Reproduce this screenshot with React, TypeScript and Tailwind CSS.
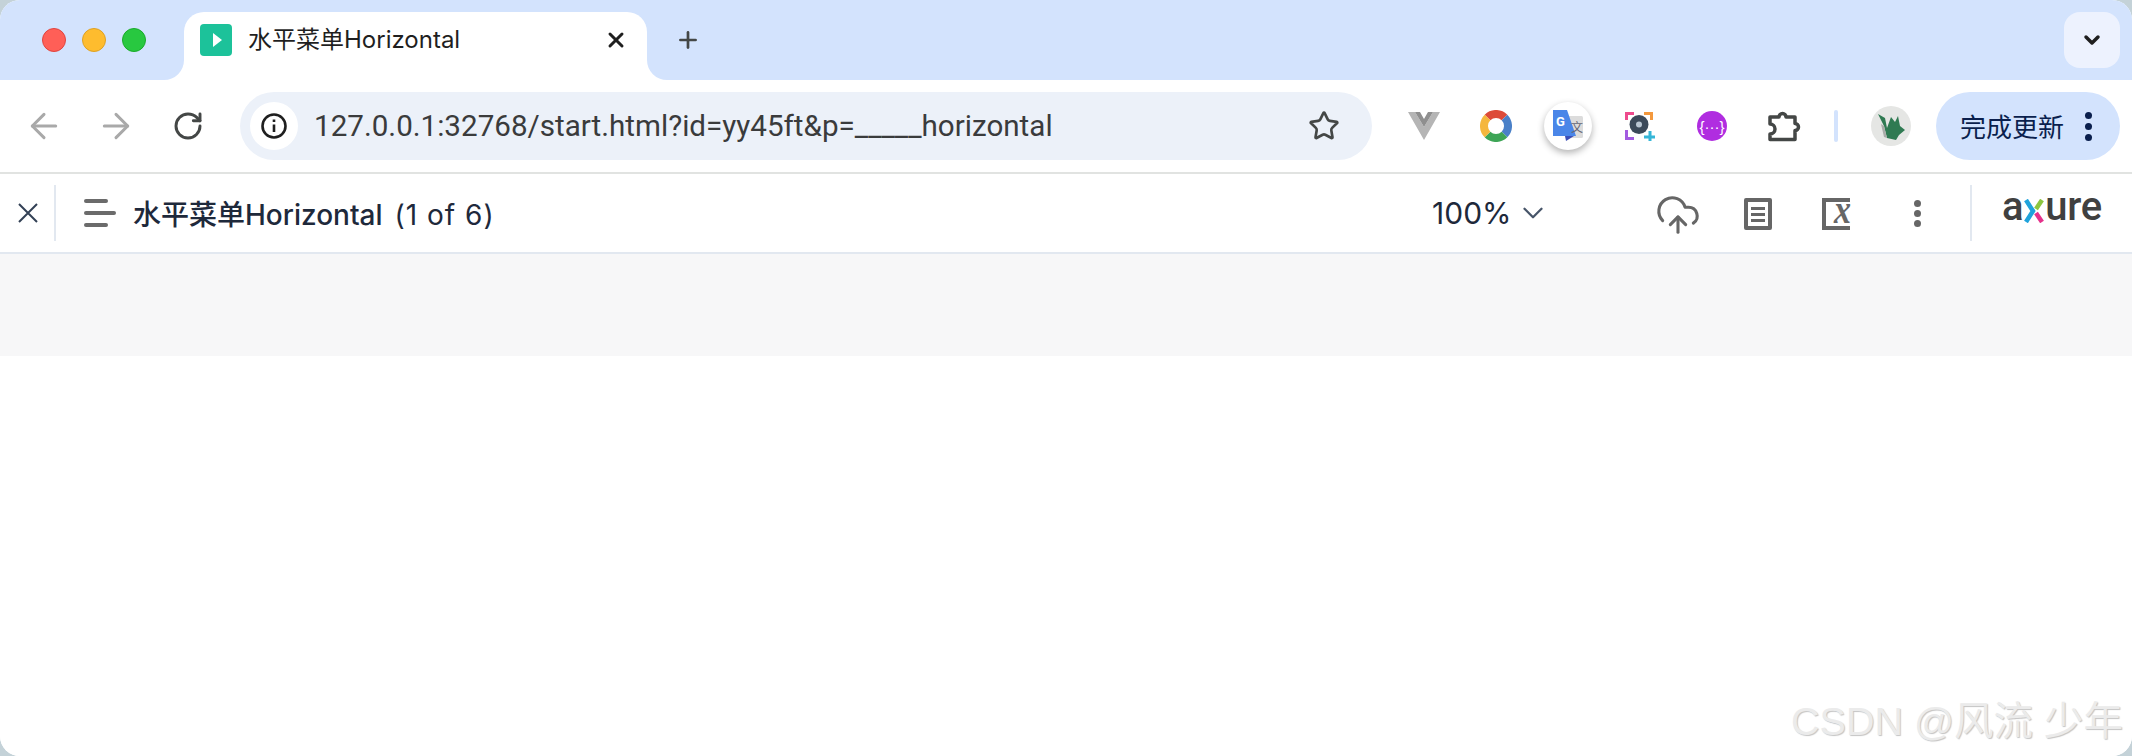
import { ArrowLeft, ArrowRight, RotateCw, Star, Plus, X, ChevronDown, CloudUpload } from "lucide-react"

const cjk = "font-['Inter','Noto_Sans_CJK_SC',sans-serif]"

function TrafficLight({ color }: { color: string }) {
  return <span className={`w-6 h-6 rounded-full border ${color}`} />
}

function TabCorner({ side }: { side: "left" | "right" }) {
  return side === "left" ? (
    <svg className="absolute -left-5 bottom-0" width="20" height="20" viewBox="0 0 20 20">
      <path d="M20 0V20H0A20 20 0 0 0 20 0Z" fill="#fff" />
    </svg>
  ) : (
    <svg className="absolute -right-5 bottom-0" width="20" height="20" viewBox="0 0 20 20">
      <path d="M0 0V20H20A20 20 0 0 1 0 0Z" fill="#fff" />
    </svg>
  )
}

function VueIcon() {
  return (
    <svg width="32" height="28" viewBox="0 0 32 28">
      <path d="M0 0H7L16 15L25 0H32L16 28Z" fill="#b5b5b5" />
      <path d="M7 0H12L16 7L20 0H25L16 15Z" fill="#8f8f8f" />
    </svg>
  )
}

function RingIcon() {
  return (
    <svg width="32" height="32" viewBox="0 0 32 32" fill="none" strokeWidth="8">
      <path d="M7.500 7.500A12 12 0 0 1 24.500 7.500" stroke="#dd4b39" />
      <path d="M24.500 7.500A12 12 0 0 1 24.500 24.500" stroke="#4a80c8" />
      <path d="M24.500 24.500A12 12 0 0 1 7.500 24.500" stroke="#3ea556" />
      <path d="M7.500 24.500A12 12 0 0 1 7.500 7.500" stroke="#f5b73d" />
    </svg>
  )
}

function TranslateIcon() {
  return (
    <div className="w-12 h-12 rounded-full bg-white shadow-[0_3px_7px_rgba(0,0,0,0.3)] flex items-center justify-center">
      <svg width="32" height="32" viewBox="0 0 32 32">
        <rect x="14" y="6" width="17" height="22" rx="1.500" fill="#dcdcdc" />
        <path d="M1 0H15L24 26H1Z" fill="#4a86e8" />
        <path d="M13 26H22L14 31Z" fill="#3b4fb8" />
        <text x="4" y="16" fontSize="13" fontWeight="700" fill="#fff" fontFamily="Roboto, sans-serif">G</text>
        <text x="19" y="22" fontSize="12" fill="#667" fontFamily="'Noto Sans CJK SC', sans-serif">文</text>
      </svg>
    </div>
  )
}

function CameraIcon() {
  return (
    <svg width="30" height="30" viewBox="0 0 30 30" fill="none" strokeWidth="3">
      <path d="M1.500 9V2.500H9" stroke="#ee4b8d" />
      <path d="M19 2.500H26.500V9" stroke="#f4993d" />
      <path d="M1.500 19V27.500H9" stroke="#a35be0" />
      <path d="M19 26H30M25 20V30" stroke="#35b6d8" />
      <circle cx="14" cy="13.500" r="9.500" fill="#3c4a5a" stroke="none" />
      <circle cx="14" cy="13.500" r="3" fill="#b9c6d2" stroke="none" />
    </svg>
  )
}

function ApiIcon() {
  return (
    <div className="w-[30px] h-[30px] rounded-full bg-[#b02de0] flex items-center justify-center text-white text-[15px] leading-none font-['Liberation_Sans',sans-serif]">
      {"{···}"}
    </div>
  )
}

function PuzzleIcon() {
  return (
    <svg width="34" height="33" viewBox="0 0 34 33" fill="none" stroke="#444746" strokeWidth="3.500" strokeLinejoin="round">
      <path d="M3 7H12A3.500 3.500 0 0 1 19 7H28V13.500A3.500 3.500 0 0 1 28 20.500V29.500H3V24A5 5 0 0 0 3 14Z" />
    </svg>
  )
}

function Avatar() {
  return (
    <div className="w-10 h-10 rounded-full bg-[#e5e6e4] flex items-center justify-center">
      <svg width="30" height="28" viewBox="0 0 30 28">
        <path d="M2 2L9 6L11 16L15 5L19 10L22 4L24 14L29 18L23 23L20 28L11 26L8 14Z" fill="#2f7a52" />
        <path d="M5 12L8 14L11 26L8 25Z" fill="#a9aca9" />
      </svg>
    </div>
  )
}

function BarsIcon() {
  return (
    <div className="w-8 flex flex-col gap-2">
      <span className="block w-6 h-1 rounded-full bg-[#6b6b6b]" />
      <span className="block w-8 h-1 rounded-full bg-[#6b6b6b]" />
      <span className="block w-6 h-1 rounded-full bg-[#6b6b6b]" />
    </div>
  )
}

function DocIcon() {
  return (
    <div className="w-7 h-8 rounded-[2px] border-4 border-[#666] flex flex-col justify-center gap-[3px] px-[3px]">
      <span className="block h-[3px] bg-[#666]" />
      <span className="block h-[3px] bg-[#666]" />
      <span className="block h-[3px] bg-[#666]" />
    </div>
  )
}

function VarIcon() {
  return (
    <svg className="overflow-visible" width="32" height="32" viewBox="0 0 32 32">
      <path d="M28 2H2V30H28" fill="none" stroke="#666" strokeWidth="4" />
      <text transform="translate(12 25) scale(1 1.200)" fontSize="34" fontWeight="700" fontStyle="italic" fill="#666" fontFamily="'Liberation Serif', serif">x</text>
    </svg>
  )
}

function AxureLogo() {
  return (
    <div className="flex items-center h-8 text-[40px] leading-none text-[#404040] font-medium tracking-[-0.3px] font-['Roboto',sans-serif]">
      <span>a</span>
      <svg className="mt-2 mx-[1px]" width="20" height="24" viewBox="0 0 20 24" fill="none" strokeWidth="4.500">
        <path d="M2 1L9 12L2 23" stroke="#1fa3dc" />
        <path d="M12 14L18 23" stroke="#e5318b" />
        <path d="M12 10L18 1" stroke="#8cc63f" />
      </svg>
      <span>ure</span>
    </div>
  )
}

export default function App() {
  return (
    <div className="w-[2132px] h-[756px] bg-[#c4d2d8] overflow-hidden">
      <div className="h-full rounded-[20px] overflow-hidden bg-white flex flex-col">
        <div className="h-20 shrink-0 bg-[#d3e3fd] flex items-end">
          <div className="self-center flex gap-4 ml-[42px]">
            <TrafficLight color="bg-[#ff5f57] border-[#e0443e]" />
            <TrafficLight color="bg-[#febc2e] border-[#dea123]" />
            <TrafficLight color="bg-[#28c840] border-[#1aab29]" />
          </div>
          <div className={`relative ml-[38px] w-[463px] h-[68px] bg-white rounded-t-[20px] flex items-center pl-4 pr-[19px] pb-3 ${cjk}`}>
            <TabCorner side="left" />
            <TabCorner side="right" />
            <div className="w-8 h-8 rounded-[4px] bg-[#1cc29a] flex items-center justify-center">
              <span className="ml-[2px] border-y-[7px] border-y-transparent border-l-[9px] border-l-white" />
            </div>
            <span className="ml-4 text-[24px] text-[#1f1f1f]">水平菜单Horizontal</span>
            <X className="ml-auto text-[#1f1f1f]" size={24} strokeWidth={3} />
          </div>
          <Plus className="self-center ml-[28px] text-[#444746]" size={26} strokeWidth={2.500} />
          <div className="self-start mt-3 ml-auto mr-3 w-14 h-14 rounded-2xl bg-[#edf2fe] flex items-center justify-center">
            <ChevronDown className="text-[#1f1f1f]" size={24} strokeWidth={3.500} />
          </div>
        </div>

        <div className="h-[92px] shrink-0 bg-white rounded-t-[20px] flex items-center relative">
          <ArrowLeft className="ml-6 text-[#a9a9a9]" size={40} strokeWidth={1.800} />
          <ArrowRight className="ml-8 text-[#a9a9a9]" size={40} strokeWidth={1.800} />
          <RotateCw className="ml-9 text-[#444746]" size={32} strokeWidth={2.200} />
          <div className="ml-9 w-[1132px] h-[68px] rounded-full bg-[#ecf1f9] flex items-center pl-[10px] pr-8">
            <div className="w-12 h-12 rounded-full bg-white flex items-center justify-center">
              <svg width="28" height="28" viewBox="0 0 28 28" fill="none" stroke="#1f1f1f" strokeWidth="2.600">
                <circle cx="14" cy="14" r="11.500" />
                <path d="M14 12.500V20M14 7.500V10" />
              </svg>
            </div>
            <span className="ml-4 text-[29.600px] text-[#3a3b3c] font-['Roboto',sans-serif]">127.0.0.1:32768/start.html?id=yy45ft&amp;p=_____horizontal</span>
            <Star className="ml-auto text-[#444746]" size={32} strokeWidth={2} />
          </div>
          <div className="ml-4 flex items-center">
            <div className="w-[72px] flex justify-center"><VueIcon /></div>
            <div className="w-[72px] flex justify-center"><RingIcon /></div>
            <div className="w-[72px] flex justify-center"><TranslateIcon /></div>
            <div className="w-[72px] flex justify-center"><CameraIcon /></div>
            <div className="w-[72px] flex justify-center"><ApiIcon /></div>
            <div className="w-[72px] flex justify-center"><PuzzleIcon /></div>
          </div>
          <span className="ml-[14px] w-1 h-8 rounded-full bg-[#d3e3fd]" />
          <div className="ml-[33px]"><Avatar /></div>
          <div className="ml-[25px] w-[184px] h-[68px] rounded-full bg-[#d3e3fd] flex items-center pl-[24px] text-[#0a1f4d] font-['Noto_Sans_CJK_SC',sans-serif]">
            <span className="text-[26px] pb-[2px]">完成更新</span>
            <div className="ml-auto mr-7 flex flex-col gap-1">
              <span className="block w-[7px] h-[7px] rounded-full bg-[#0a1f4d]" />
              <span className="block w-[7px] h-[7px] rounded-full bg-[#0a1f4d]" />
              <span className="block w-[7px] h-[7px] rounded-full bg-[#0a1f4d]" />
            </div>
          </div>
        </div>

        <div className={`h-[82px] shrink-0 border-t-2 border-b-2 border-t-[#e1e3e1] border-b-[#e2e8f0] flex items-center text-[#1e293b] ${cjk}`}>
          <svg className="ml-[18px]" width="20" height="20" viewBox="0 0 20 20" fill="none" stroke="#334155" strokeWidth="2">
            <path d="M1 1L19 19M19 1L1 19" />
          </svg>
          <span className="ml-4 w-[2px] h-14 bg-[#e2e8f0]" />
          <div className="ml-7"><BarsIcon /></div>
          <div className="ml-[17px] flex-1 flex items-center pt-1">
            <span className="text-[28px] font-medium">水平菜单Horizontal</span>
            <span className="ml-3 text-[28px] tracking-[1px]">(1 of 6)</span>
          </div>
          <div className="w-[700px] flex items-center shrink-0">
            <span className="w-[80px] text-[30px]">100%</span>
            <ChevronDown className="ml-1 text-[#475569]" size={34} strokeWidth={1.600} />
            <CloudUpload className="ml-[105px] mt-1 text-[#666]" size={46} strokeWidth={1.600} />
            <div className="ml-[43px] mt-[2px]"><DocIcon /></div>
            <div className="ml-[50px] mt-[2px]"><VarIcon /></div>
            <div className="ml-[60px] flex flex-col gap-[3px]">
              <span className="block w-[7px] h-[7px] rounded-full bg-[#666]" />
              <span className="block w-[7px] h-[7px] rounded-full bg-[#666]" />
              <span className="block w-[7px] h-[7px] rounded-full bg-[#666]" />
            </div>
            <span className="ml-[49px] w-[2px] h-14 bg-[#e2e8f0]" />
            <div className="ml-[30px] -mt-3"><AxureLogo /></div>
          </div>
        </div>

        <div className="h-[102px] shrink-0 bg-[#f7f7f8]" />

        <div className="flex-1 relative bg-white">
          <span className="absolute right-[9px] bottom-[15px] text-[39.500px] leading-none text-[#ebebeb] [text-shadow:1px_1px_1px_#c4c4c4] font-['Liberation_Sans','Noto_Sans_CJK_SC',sans-serif]">CSDN @风流 少年</span>
        </div>
      </div>
    </div>
  )
}
